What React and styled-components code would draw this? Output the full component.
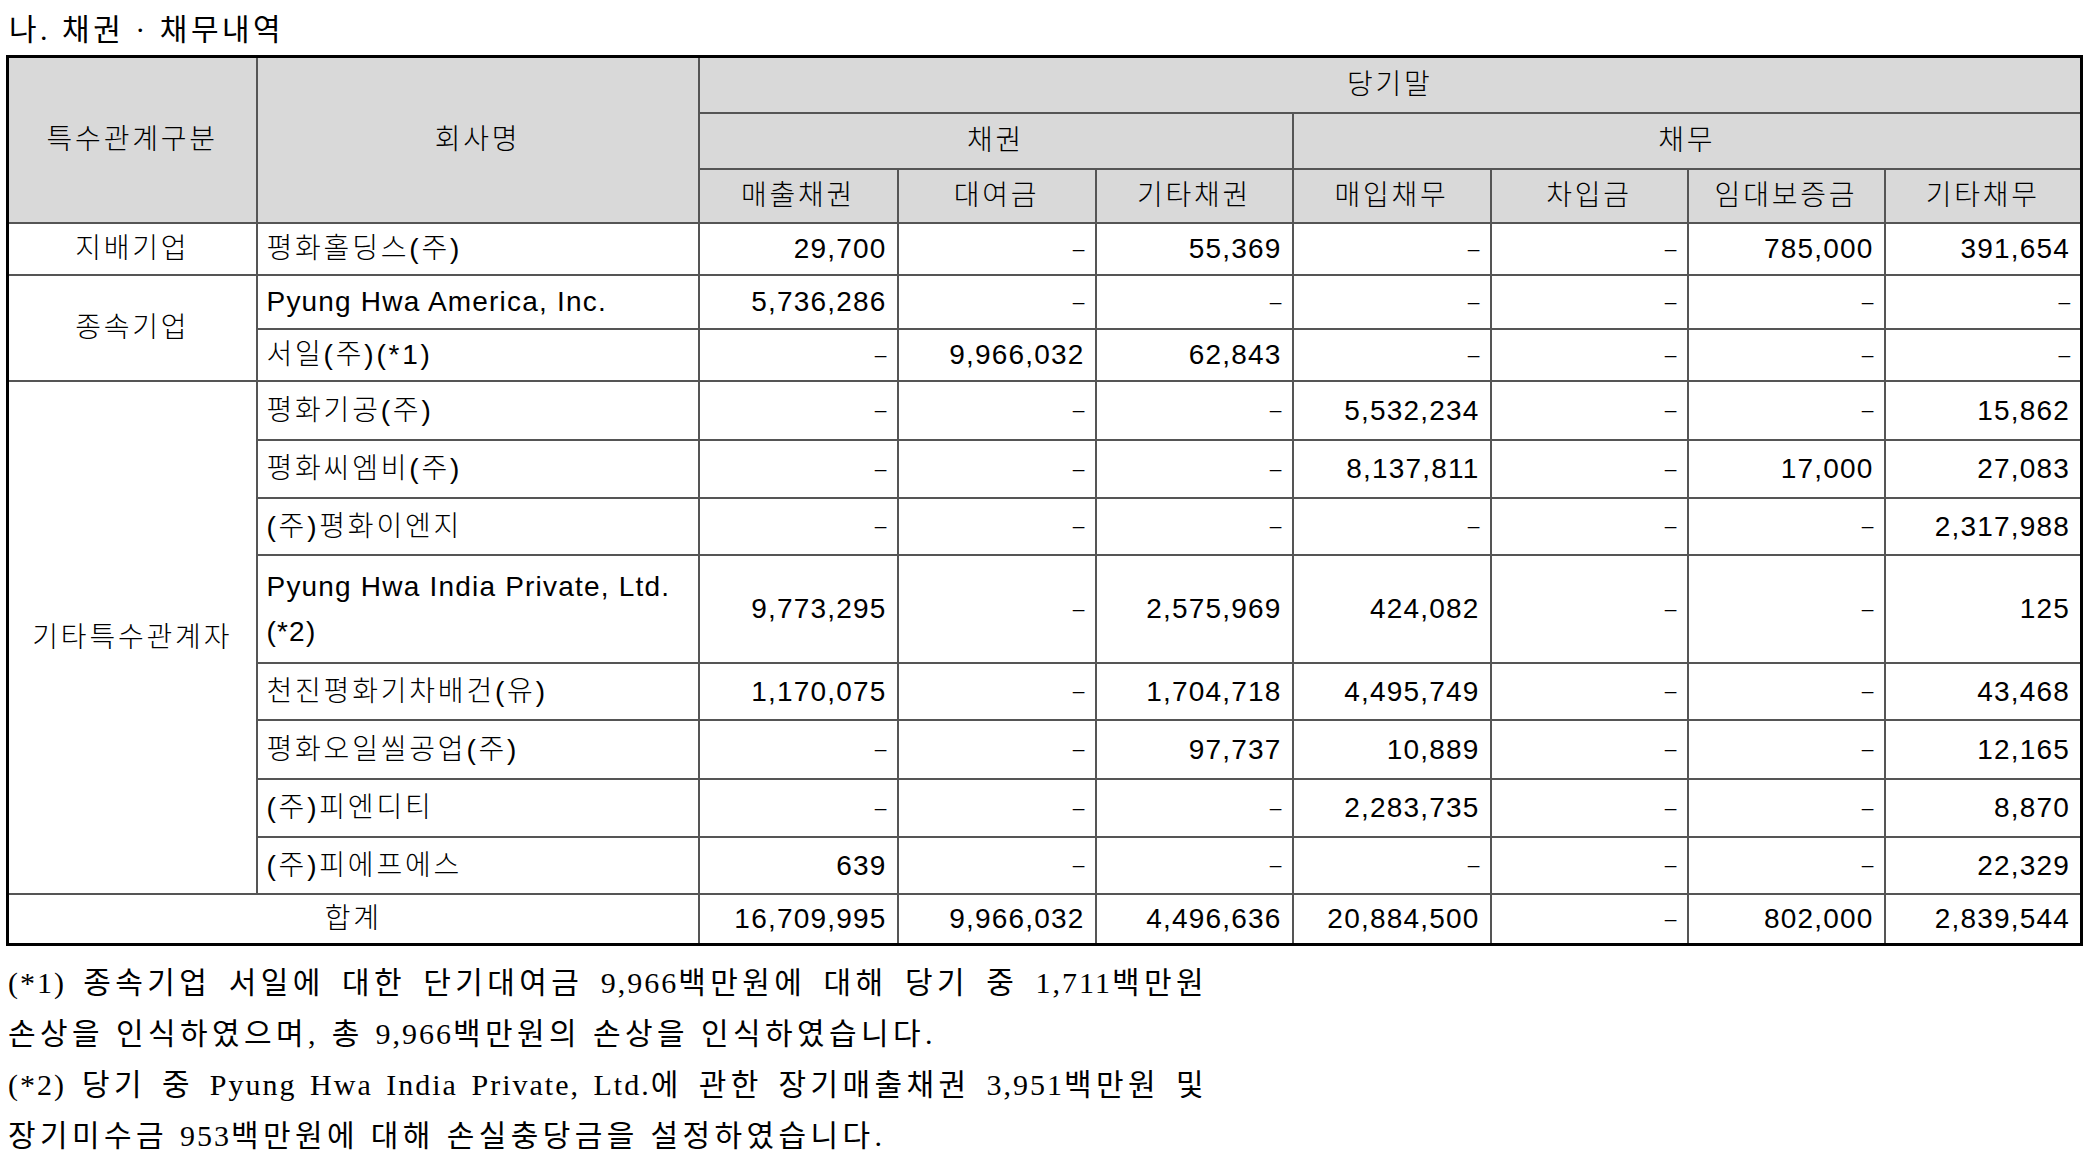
import React from 'react';
import styled, { createGlobalStyle } from 'styled-components';

const GlobalStyle = createGlobalStyle`
  html, body { margin: 0; padding: 0; background: #fff; }
  body {
    font-family: "Liberation Sans", "Noto Sans CJK KR", sans-serif;
    color: #000;
  }
`;

const Page = styled.div`
  width: 2086px;
  box-sizing: border-box;
  padding: 0 4px 0 6px;
`;

const Title = styled.h2`
  margin: 0;
  padding: 10px 0 5px 3px;
  font: 400 30px/40px "Liberation Serif", "Noto Sans CJK KR", serif;
  letter-spacing: 3.5px;
`;

const Table = styled.table`
  border-collapse: collapse;
  table-layout: fixed;
  width: 2076px;
  border: 3px solid #000;
  font-family: "Liberation Sans", "Noto Sans CJK KR", sans-serif;
  font-weight: 300;
  font-size: 28px;
  letter-spacing: 1.2px;
`;

const Row = styled.tr`
  height: ${p => p.$h}px;
`;

const Cell = styled.td`
  border: 2px solid #555;
  padding: 0 ${p => (p.$align === 'right' ? '10px' : '9px')};
  text-align: ${p => p.$align || 'center'};
  background: ${p => (p.$head ? '#d9d9d9' : '#fff')};
  vertical-align: middle;
  line-height: 45px;
  white-space: nowrap;
  font-weight: inherit;
  letter-spacing: ${p => (p.$ko ? '2.8px' : '1.2px')};
`;

const Dash = styled.span`
  font-size: 21px;
  vertical-align: 3px;
  letter-spacing: 0;
`;

const Notes = styled.div`
  width: 1200px;
  margin-top: 11px;
  padding-left: 2px;
  font: 400 30px/51px "Liberation Serif", "Noto Sans CJK KR", serif;
  letter-spacing: 4.4px;
`;

const NoteLine = styled.div`
  text-align: ${p => (p.$justify ? 'justify' : 'left')};
  text-align-last: ${p => (p.$justify ? 'justify' : 'auto')};
  white-space: ${p => (p.$justify ? 'normal' : 'nowrap')};
`;

const Lat = styled.span`
  letter-spacing: 2px;
`;

const rows = [
  { group: '지배기업', span: 1, name: '평화홀딩스(주)', v: ['29,700', '-', '55,369', '-', '-', '785,000', '391,654'], h: 52 },
  { group: '종속기업', span: 2, name: 'Pyung Hwa America, Inc.', latin: true, v: ['5,736,286', '-', '-', '-', '-', '-', '-'], h: 54 },
  { name: '서일(주)(*1)', v: ['-', '9,966,032', '62,843', '-', '-', '-', '-'], h: 52 },
  { group: '기타특수관계자', span: 8, name: '평화기공(주)', v: ['-', '-', '-', '5,532,234', '-', '-', '15,862'], h: 59 },
  { name: '평화씨엠비(주)', v: ['-', '-', '-', '8,137,811', '-', '17,000', '27,083'], h: 58 },
  { name: '(주)평화이엔지', v: ['-', '-', '-', '-', '-', '-', '2,317,988'], h: 57 },
  { name: ['Pyung Hwa India Private, Ltd.', '(*2)'], latin: true, v: ['9,773,295', '-', '2,575,969', '424,082', '-', '-', '125'], h: 108 },
  { name: '천진평화기차배건(유)', v: ['1,170,075', '-', '1,704,718', '4,495,749', '-', '-', '43,468'], h: 57 },
  { name: '평화오일씰공업(주)', v: ['-', '-', '97,737', '10,889', '-', '-', '12,165'], h: 59 },
  { name: '(주)피엔디티', v: ['-', '-', '-', '2,283,735', '-', '-', '8,870'], h: 58 },
  { name: '(주)피에프에스', v: ['639', '-', '-', '-', '-', '-', '22,329'], h: 57 },
];

const totals = ['16,709,995', '9,966,032', '4,496,636', '20,884,500', '-', '802,000', '2,839,544'];

const colWidths = [249, 442, 199, 198, 197, 198, 197, 197, 197];

const heads = ['매출채권', '대여금', '기타채권', '매입채무', '차입금', '임대보증금', '기타채무'];

function Amount({ value }) {
  return (
    <Cell $align="right">{value === '-' ? <Dash>–</Dash> : value}</Cell>
  );
}

export default function App() {
  return (
    <>
      <GlobalStyle />
      <Page>
        <Title>나. 채권 · 채무내역</Title>
        <Table>
          <colgroup>
            {colWidths.map((w, i) => (
              <col key={i} style={{ width: w }} />
            ))}
          </colgroup>
          <thead>
            <Row $h={56}>
              <Cell as="th" $head $ko rowSpan={3}>특수관계구분</Cell>
              <Cell as="th" $head $ko rowSpan={3}>회사명</Cell>
              <Cell as="th" $head $ko colSpan={7}>당기말</Cell>
            </Row>
            <Row $h={56}>
              <Cell as="th" $head $ko colSpan={3}>채권</Cell>
              <Cell as="th" $head $ko colSpan={4}>채무</Cell>
            </Row>
            <Row $h={54}>
              {heads.map(t => (
                <Cell as="th" $head $ko key={t}>{t}</Cell>
              ))}
            </Row>
          </thead>
          <tbody>
            {rows.map((r, i) => (
              <Row $h={r.h} key={i}>
                {r.group && <Cell $ko rowSpan={r.span}>{r.group}</Cell>}
                <Cell $align="left" $ko={!r.latin}>
                  {Array.isArray(r.name) ? (
                    <>
                      {r.name[0]}
                      <br />
                      {r.name[1]}
                    </>
                  ) : (
                    r.name
                  )}
                </Cell>
                {r.v.map((x, j) => (
                  <Amount value={x} key={j} />
                ))}
              </Row>
            ))}
            <Row $h={51}>
              <Cell $ko colSpan={2}>합계</Cell>
              {totals.map((x, j) => (
                <Amount value={x} key={j} />
              ))}
            </Row>
          </tbody>
        </Table>
        <Notes>
          <NoteLine $justify>
            <Lat>(*1)</Lat> 종속기업 서일에 대한 단기대여금 <Lat>9,966</Lat>백만원에 대해 당기 중 <Lat>1,711</Lat>백만원
          </NoteLine>
          <NoteLine>
            손상을 인식하였으며, 총 <Lat>9,966</Lat>백만원의 손상을 인식하였습니다.
          </NoteLine>
          <NoteLine $justify>
            <Lat>(*2)</Lat> 당기 중 <Lat>Pyung Hwa India Private, Ltd.</Lat>에 관한 장기매출채권 <Lat>3,951</Lat>백만원 및
          </NoteLine>
          <NoteLine>
            장기미수금 <Lat>953</Lat>백만원에 대해 손실충당금을 설정하였습니다.
          </NoteLine>
        </Notes>
      </Page>
    </>
  );
}
